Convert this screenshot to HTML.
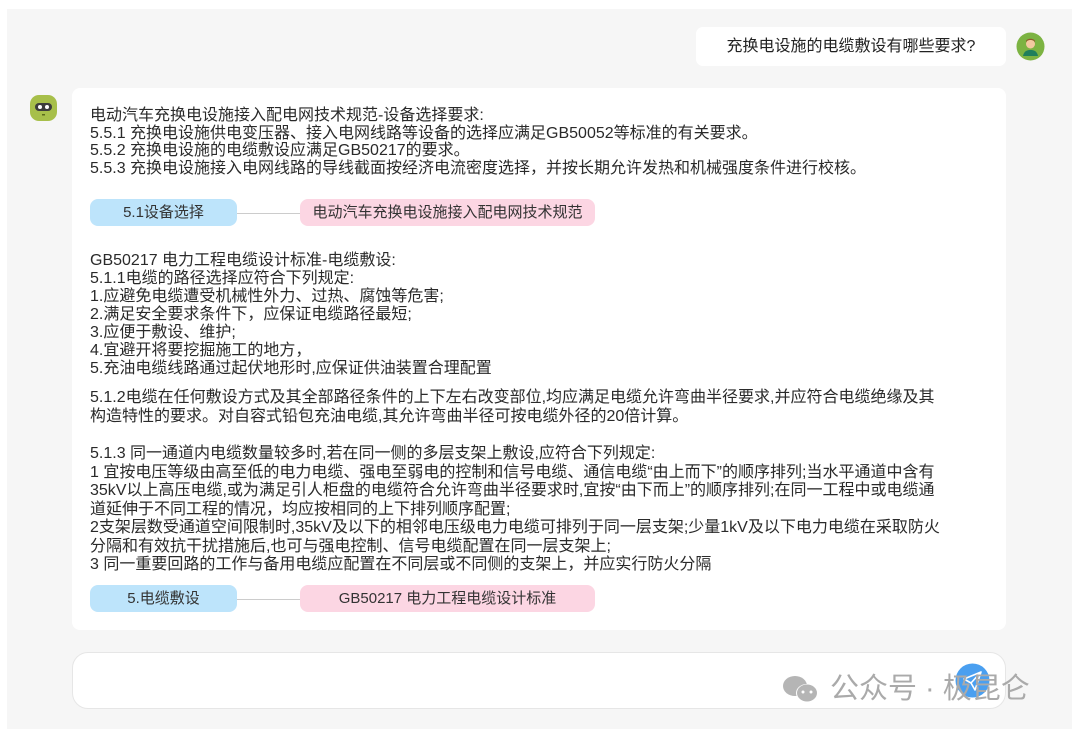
<!DOCTYPE html>
<html><head><meta charset="utf-8"><style>
*{margin:0;padding:0;box-sizing:border-box}
body{width:1080px;height:734px;background:#fff;font-family:"Liberation Sans","Noto Sans CJK SC",sans-serif;color:#333;position:relative;overflow:hidden}
.panel{position:absolute;left:7px;top:9px;width:1065px;height:720px;background:#f6f6f6}
.ub{position:absolute;left:696px;top:27px;width:310px;height:39px;background:#fff;border-radius:7px;font-size:16px;line-height:39px;text-align:center;color:#222}
.card{position:absolute;left:72px;top:88px;width:934px;height:542px;background:#fff;border-radius:8px}
.t{position:absolute;left:90px;font-size:16px;color:#2a2a2a;white-space:nowrap}
.pill{position:absolute;height:27px;border-radius:8px;font-size:15px;line-height:27px;text-align:center;color:#333}
.blue{background:#bde4fb;left:90px;width:147px}
.pink{background:#fcd6e3;left:300px;width:295px}
.arr{position:absolute;left:237px;width:63px;height:1px;background:#ccc}
.input{position:absolute;left:72px;top:652px;width:934px;height:57px;background:#fff;border:1px solid #e6e6e6;border-radius:16px}
</style></head><body>
<div class="panel"></div>
<div class="ub">充换电设施的电缆敷设有哪些要求?</div>
<svg style="position:absolute;left:1016px;top:32px" width="29" height="29" viewBox="0 0 29 29"><circle cx="14.5" cy="14.5" r="14" fill="#7cb342"/><circle cx="14.5" cy="12" r="4.5" fill="#f3c9a0"/><path d="M10 11c0-4 9-4 9 0v-2c-1-3-8-3-9 0z" fill="#8d5a2b"/><path d="M7 24c1-5 4-6 7.5-6s6.5 1 7.5 6z" fill="#1e7f5c"/></svg>
<svg style="position:absolute;left:30px;top:95px" width="27" height="26" viewBox="0 0 27 26"><rect x="0" y="0" width="27" height="26" rx="9" fill="#a7bf4a"/><rect x="5" y="8" width="17" height="8" rx="4" fill="#3c3c3c"/><circle cx="10" cy="12" r="2" fill="#fff"/><circle cx="17" cy="12" r="2" fill="#fff"/><rect x="12" y="19" width="3" height="1.5" fill="#5a6b1c"/></svg>
<div class="card"></div>
<div class="t" style="top:107px;line-height:17.5px">电动汽车充换电设施接入配电网技术规范-设备选择要求:<br>5.5.1 充换电设施供电变压器、接入电网线路等设备的选择应满足GB50052等标准的有关要求。<br>5.5.2 充换电设施的电缆敷设应满足GB50217的要求。<br>5.5.3 充换电设施接入电网线路的导线截面按经济电流密度选择，并按长期允许发热和机械强度条件进行校核。</div>
<div class="pill blue" style="top:199px">5.1设备选择</div><div class="arr" style="top:213px"></div>
<div class="pill pink" style="top:199px">电动汽车充换电设施接入配电网技术规范</div>
<div class="t" style="top:252px;line-height:18px">GB50217 电力工程电缆设计标准-电缆敷设:<br>5.1.1电缆的路径选择应符合下列规定:<br>1.应避免电缆遭受机械性外力、过热、腐蚀等危害;<br>2.满足安全要求条件下，应保证电缆路径最短;<br>3.应便于敷设、维护;<br>4.宜避开将要挖掘施工的地方，<br>5.充油电缆线路通过起伏地形时,应保证供油装置合理配置</div>
<div class="t" style="top:388px;line-height:19px">5.1.2电缆在任何敷设方式及其全部路径条件的上下左右改变部位,均应满足电缆允许弯曲半径要求,并应符合电缆绝缘及其<br>构造特性的要求。对自容式铅包充油电缆,其允许弯曲半径可按电缆外径的20倍计算。</div>
<div class="t" style="top:445px;line-height:18.5px">5.1.3 同一通道内电缆数量较多时,若在同一侧的多层支架上敷设,应符合下列规定:<br>1 宜按电压等级由高至低的电力电缆、强电至弱电的控制和信号电缆、通信电缆“由上而下”的顺序排列;当水平通道中含有<br>35kV以上高压电缆,或为满足引人柜盘的电缆符合允许弯曲半径要求时,宜按“由下而上”的顺序排列;在同一工程中或电缆通<br>道延伸于不同工程的情况，均应按相同的上下排列顺序配置;<br>2支架层数受通道空间限制时,35kV及以下的相邻电压级电力电缆可排列于同一层支架;少量1kV及以下电力电缆在采取防火<br>分隔和有效抗干扰措施后,也可与强电控制、信号电缆配置在同一层支架上;<br>3 同一重要回路的工作与备用电缆应配置在不同层或不同侧的支架上，并应实行防火分隔</div>
<div class="pill blue" style="top:585px">5.电缆敷设</div><div class="arr" style="top:599px"></div>
<div class="pill pink" style="top:585px">GB50217 电力工程电缆设计标准</div>
<div class="input"></div>
<svg style="position:absolute;left:955px;top:663px" width="35" height="35" viewBox="0 0 35 35"><circle cx="17.5" cy="17.5" r="17" fill="#4a9ff0"/><path d="M9 16l17-7-6 18-4-7z M16 20l10-11" fill="none" stroke="#fff" stroke-width="1.6" stroke-linejoin="round"/></svg>
<svg style="position:absolute;left:781px;top:675px" width="40" height="30" viewBox="0 0 40 30"><ellipse cx="14" cy="11" rx="12" ry="10" fill="#b5b5b5"/><ellipse cx="26" cy="18" rx="11" ry="9" fill="#fff"/><ellipse cx="26" cy="18" rx="10" ry="8.5" fill="#b5b5b5"/><circle cx="22" cy="17" r="1.5" fill="#fff"/><circle cx="30" cy="17" r="1.5" fill="#fff"/></svg>
<div style="position:absolute;left:830px;top:670px;font-size:29px;color:#aaa;line-height:38px;white-space:nowrap">公众号 · 极昆仑</div>
</body></html>
